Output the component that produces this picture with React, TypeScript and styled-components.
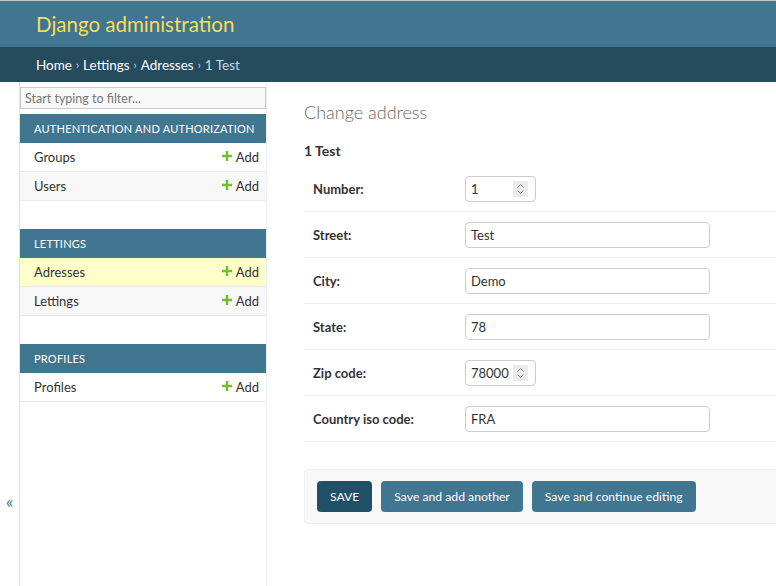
import React from "react";
import styled, { createGlobalStyle } from "styled-components";

const GlobalStyle = createGlobalStyle`
  html, body {
    margin: 0;
    padding: 0;
    background: #fff;
  }
  body {
    font-family: Lato, "Open Sans", sans-serif;
    color: #333;
    font-size: 13px;
  }
`;

const Page = styled.div`
  width: 776px;
  height: 586px;
  overflow: hidden;
  display: flex;
  flex-direction: column;
  border-top: 1px solid #c8c8c8;
  box-sizing: border-box;
`;

const Header = styled.div`
  height: 46px;
  background: #417690;
  display: flex;
  align-items: center;
  padding: 0 36px;
`;

const SiteName = styled.h1`
  margin: 0;
  font-size: 20.5px;
  font-weight: 400;
  color: #f5dd5d;
`;

const Breadcrumbs = styled.div`
  height: 35px;
  background: #264b5d;
  display: flex;
  align-items: center;
  padding: 0 36px;
  color: #fff;
  font-size: 13.5px;
  gap: 4px;
`;

const Crumb = styled.span<{ $current?: boolean }>`
  color: ${(p) => (p.$current ? "#c4dce8" : "#fff")};
`;

const Sep = styled.span`
  color: #c4dce8;
  font-size: 11px;
`;

const Body = styled.div`
  flex: 1;
  display: flex;
  min-height: 0;
`;

const Toggle = styled.div`
  width: 20px;
  border-right: 1px solid #e0e0e0;
  display: flex;
  justify-content: center;
  align-items: flex-start;
  color: #447e9b;
  font-size: 18px;
  padding-top: 408px;
  box-sizing: border-box;
`;

const Sidebar = styled.nav`
  width: 246px;
  border-right: 1px solid #eee;
  padding-top: 5px;
`;

const Filter = styled.input`
  width: 100%;
  height: 22px;
  box-sizing: border-box;
  border: 1px solid #ccc;
  background: #f8f8f8;
  font-family: inherit;
  font-size: 12.5px;
  padding: 0 4px;
  margin: 0 0 5px;
  display: block;
  color: #666;
  &::placeholder {
    color: #777;
  }
`;

const Module = styled.div`
  margin-bottom: 28px;
`;

const ModuleHeader = styled.div`
  height: 29px;
  background: #417690;
  color: #fff;
  font-size: 11px;
  letter-spacing: 0.22px;
  text-transform: uppercase;
  white-space: nowrap;
  display: flex;
  align-items: center;
  padding: 0 14px;
`;

const ModuleRow = styled.div<{ $alt?: boolean; $selected?: boolean }>`
  height: 29px;
  box-sizing: border-box;
  border-bottom: 1px solid #e8e8e8;
  background: ${(p) => (p.$selected ? "#ffc" : p.$alt ? "#f8f8f8" : "#fff")};
  display: flex;
  align-items: center;
  justify-content: space-between;
  padding: 0 7px 0 14px;
  font-size: 13px;
  color: #333;
`;

const AddLink = styled.span`
  display: flex;
  align-items: center;
  gap: 4px;
  color: #333;
`;

const Plus = () => (
  <svg width="10" height="10" viewBox="0 0 10 10" style={{ marginTop: -3 }}>
    <path d="M3.8 0h2.4v3.8H10v2.4H6.2V10H3.8V6.2H0V3.8h3.8z" fill="#70bf2b" />
  </svg>
);

const Content = styled.main`
  flex: 1;
  padding: 19px 0 0 37px;
`;

const Title = styled.h1`
  margin: 0;
  font-size: 18px;
  font-weight: 300;
  color: #666;
`;

const ObjectName = styled.h2`
  margin: 19px 0 7px;
  font-size: 14px;
  font-weight: 700;
  color: #333;
`;

const FormRow = styled.div`
  height: 46px;
  box-sizing: border-box;
  border-bottom: 1px solid #eee;
  display: flex;
  align-items: center;
  padding-left: 9px;
`;

const Label = styled.label`
  width: 152px;
  font-size: 13px;
  font-weight: 700;
  color: #333;
`;

const TextInput = styled.div<{ $narrow?: boolean }>`
  width: ${(p) => (p.$narrow ? "71px" : "245px")};
  height: 26px;
  box-sizing: border-box;
  border: 1px solid #ccc;
  border-radius: 4px;
  display: flex;
  align-items: center;
  justify-content: space-between;
  padding: 0 7px 0 5px;
  font-size: 13px;
  color: #333;
`;

const Spinner = styled.div`
  width: 15px;
  height: 16px;
  background: #ebebeb;
  display: flex;
  align-items: center;
  justify-content: center;
`;

const Submit = styled.div`
  margin-top: 27px;
  height: 55px;
  box-sizing: border-box;
  background: #f8f8f8;
  border: 1px solid #eee;
  border-right: none;
  border-radius: 4px 0 0 4px;
  display: flex;
  align-items: center;
  padding-left: 12px;
  gap: 9px;
`;

const Button = styled.button<{ $default?: boolean }>`
  height: 31px;
  border: none;
  border-radius: 4px;
  background: ${(p) => (p.$default ? "#205067" : "#417690")};
  color: #fff;
  font-family: inherit;
  font-size: 12.2px;
  padding: 0 13px;
  cursor: pointer;
`;

const SpinIcon = () => (
  <svg width="9" height="12" viewBox="0 0 9 12">
    <path d="M1.5 4.5L4.5 1.5L7.5 4.5M1.5 7.5L4.5 10.5L7.5 7.5" stroke="#888" fill="none" strokeWidth="1" />
  </svg>
);

const modules = [
  {
    name: "Authentication and Authorization",
    items: ["Groups", "Users"],
  },
  { name: "Lettings", items: ["Adresses", "Lettings"], selected: "Adresses" },
  { name: "Profiles", items: ["Profiles"] },
];

const fields = [
  { label: "Number:", value: "1", narrow: true },
  { label: "Street:", value: "Test" },
  { label: "City:", value: "Demo" },
  { label: "State:", value: "78" },
  { label: "Zip code:", value: "78000", narrow: true },
  { label: "Country iso code:", value: "FRA" },
];

export default function App() {
  return (
    <Page>
      <GlobalStyle />
      <Header>
        <SiteName>Django administration</SiteName>
      </Header>
      <Breadcrumbs>
        <Crumb>Home</Crumb>
        <Sep>›</Sep>
        <Crumb>Lettings</Crumb>
        <Sep>›</Sep>
        <Crumb>Adresses</Crumb>
        <Sep>›</Sep>
        <Crumb $current>1 Test</Crumb>
      </Breadcrumbs>
      <Body>
        <Toggle>«</Toggle>
        <Sidebar>
          <Filter placeholder="Start typing to filter..." />
          {modules.map((m) => (
            <Module key={m.name}>
              <ModuleHeader>{m.name}</ModuleHeader>
              {m.items.map((item, i) => (
                <ModuleRow key={item} $alt={i % 2 === 1} $selected={m.selected === item}>
                  <span>{item}</span>
                  <AddLink>
                    <Plus />
                    Add
                  </AddLink>
                </ModuleRow>
              ))}
            </Module>
          ))}
        </Sidebar>
        <Content>
          <Title>Change address</Title>
          <ObjectName>1 Test</ObjectName>
          {fields.map((f) => (
            <FormRow key={f.label}>
              <Label>{f.label}</Label>
              <TextInput $narrow={f.narrow}>
                <span>{f.value}</span>
                {f.narrow && (
                  <Spinner>
                    <SpinIcon />
                  </Spinner>
                )}
              </TextInput>
            </FormRow>
          ))}
          <Submit>
            <Button $default>SAVE</Button>
            <Button>Save and add another</Button>
            <Button>Save and continue editing</Button>
          </Submit>
        </Content>
      </Body>
    </Page>
  );
}
